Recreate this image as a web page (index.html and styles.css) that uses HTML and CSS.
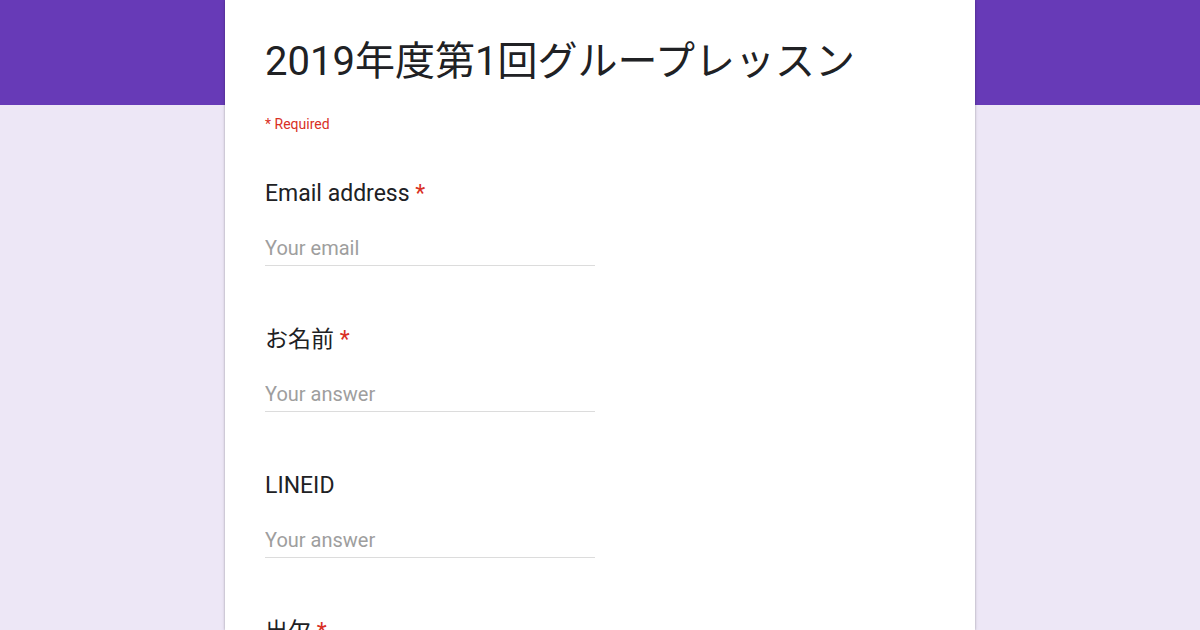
FILE: index.html
```html
<!DOCTYPE html>
<html lang="ja">
<head>
  <meta charset="UTF-8">
  <meta name="viewport" content="width=device-width, initial-scale=1.0">
  <title>2019年度第1回グループレッスン</title>
  <link rel="stylesheet" href="styles.css">
</head>
<body>
  <div class="band"></div>
  <main class="page">
    <form class="card">
      <header class="form-head">
        <h1>2019年度第1回グループレッスン</h1>
        <p class="required-note">* Required</p>
      </header>
      <div class="question">
        <label for="email">Email address <span class="star">*</span></label>
        <input type="email" id="email" placeholder="Your email">
      </div>
      <div class="question">
        <label for="name">お名前 <span class="star">*</span></label>
        <input type="text" id="name" placeholder="Your answer">
      </div>
      <div class="question">
        <label for="lineid">LINEID</label>
        <input type="text" id="lineid" placeholder="Your answer">
      </div>
      <div class="question">
        <label>出欠 <span class="star">*</span></label>
      </div>
    </form>
  </main>
</body>
</html>
```

FILE: styles.css
```css
/* Base Reset */
* { margin: 0; padding: 0; box-sizing: border-box; }
html, body { height: 100%; }
body {
  background: #ede7f6;
  color: #202124;
  font-family: Roboto, "Noto Sans CJK JP", sans-serif;
  overflow: hidden;
  position: relative;
}
/* Purple top band */
.band {
  height: 105px;
  background: #673ab7;
}
/* Card */
.page {
  position: absolute;
  top: 0;
  left: 0;
  right: 0;
  display: flex;
  justify-content: center;
}
.card {
  width: 750px;
  height: 630px;
  overflow: hidden;
  background: #fff;
  box-shadow: 0 0 2px rgba(0,0,0,0.25), 0 1px 4px rgba(0,0,0,0.12);
  padding: 34px 40px 0;
}
.form-head h1 {
  font-size: 40px;
  font-weight: 400;
  line-height: 56px;
  letter-spacing: 0;
}
.required-note {
  color: #d93025;
  font-size: 14px;
  line-height: 20px;
  margin-top: 24px;
}
/* Questions */
.question {
  margin-top: 45px;
  display: flex;
  flex-direction: column;
}
.question + .question { margin-top: 59px; }
.question label {
  font-size: 23px;
  line-height: 30px;
  font-weight: 400;
}
.star { color: #d93025; }
.question input {
  width: 330px;
  margin-top: 26px;
  border: none;
  border-bottom: 1px solid #dcdcdc;
  font-family: Roboto, sans-serif;
  font-size: 20px;
  line-height: 26px;
  padding: 0 0 4px;
  color: #202124;
  outline: none;
  background: transparent;
}
.question input::placeholder { color: #9e9e9e; }
```
